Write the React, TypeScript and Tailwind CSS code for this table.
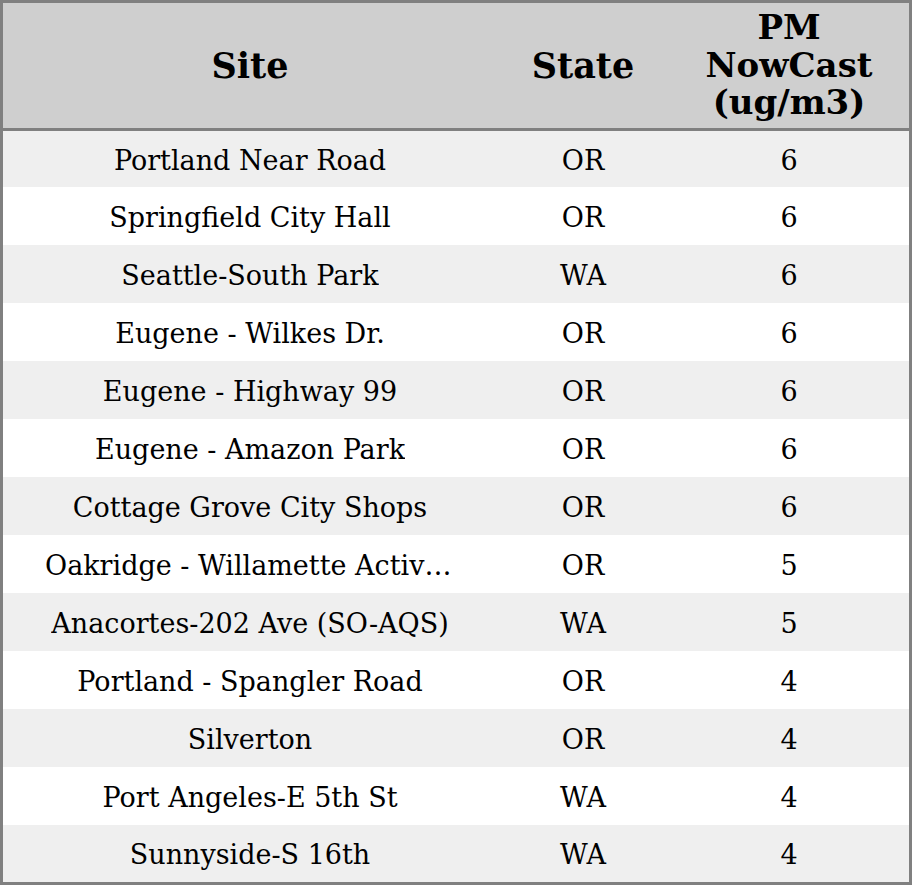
const rows: [string, string, number][] = [
  ['Portland Near Road', 'OR', 6],
  ['Springfield City Hall', 'OR', 6],
  ['Seattle-South Park', 'WA', 6],
  ['Eugene - Wilkes Dr.', 'OR', 6],
  ['Eugene - Highway 99', 'OR', 6],
  ['Eugene - Amazon Park', 'OR', 6],
  ['Cottage Grove City Shops', 'OR', 6],
  ['Oakridge - Willamette Activity Center', 'OR', 5],
  ['Anacortes-202 Ave (SO-AQS)', 'WA', 5],
  ['Portland - Spangler Road', 'OR', 4],
  ['Silverton', 'OR', 4],
  ['Port Angeles-E 5th St', 'WA', 4],
  ['Sunnyside-S 16th', 'WA', 4],
];

export default function App() {
  return (
    <div
      className="w-[912px] h-[885px] border-[3px] border-[#808080] bg-white text-black flex flex-col"
      style={{ fontFamily: '"DejaVu Serif", serif' }}
    >
      {/* header */}
      <div className="h-[128px] shrink-0 bg-[#cfcfcf] border-b-[3px] border-[#808080] grid grid-cols-[494px_172px_1fr] items-center font-bold text-center">
        <div className="text-[35px] pt-[2px]">Site</div>
        <div className="text-[35px] pt-[2px]">State</div>
        <div className="text-[34px] leading-[37.5px]">
          PM
          <br />
          NowCast
          <br />
          (ug/m3)
        </div>
      </div>

      {rows.map(([site, state, value], i) => (
        <div
          key={site}
          className={`grid grid-cols-[494px_172px_1fr] items-center text-center text-[27px] pt-[4px] ${
            i % 2 === 0 ? 'bg-[#efefef]' : 'bg-white'
          } ${i === 0 ? 'h-[56px]' : i === rows.length - 1 ? 'h-[57px]' : 'h-[58px]'}`}
        >
          <div className="flex justify-center">
            <span className="truncate max-w-[410px]">{site}</span>
          </div>
          <div>{state}</div>
          <div>{value}</div>
        </div>
      ))}
    </div>
  );
}
